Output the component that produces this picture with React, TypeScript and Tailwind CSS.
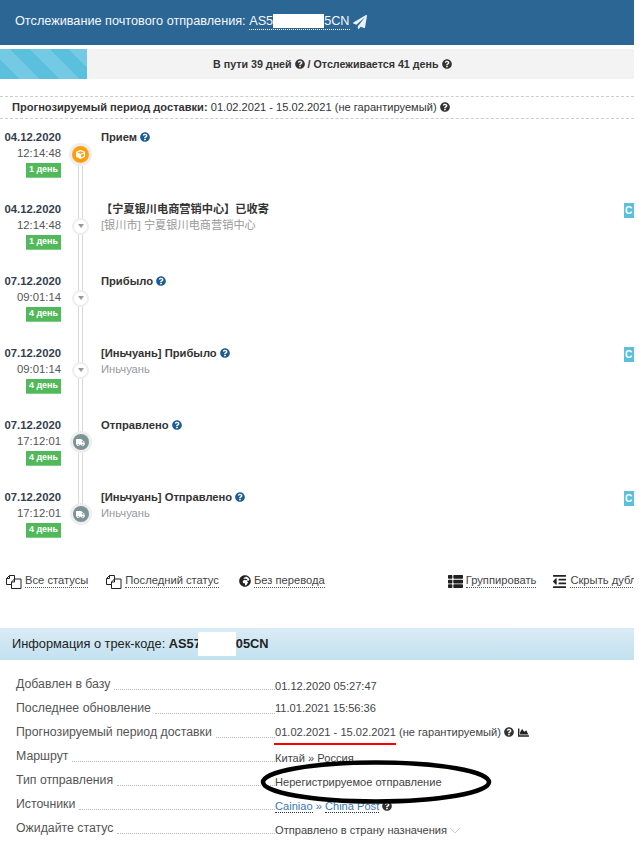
import { FaQuestionCircle, FaPaperPlane, FaGlobeAfrica, FaThList, FaOutdent, FaTruck, FaCube, FaChartArea } from 'react-icons/fa'

const events = [
  { date: '04.12.2020', time: '12:14:48', days: '1 день', title: 'Прием', help: true, kind: 'box' },
  { date: '04.12.2020', time: '12:14:48', days: '1 день', title: '【宁夏银川电商营销中心】已收寄', sub: '[银川市] 宁夏银川电商营销中心', kind: 'arrow', side: true },
  { date: '07.12.2020', time: '09:01:14', days: '4 день', title: 'Прибыло', help: true, kind: 'arrow' },
  { date: '07.12.2020', time: '09:01:14', days: '4 день', title: '[Иньчуань] Прибыло', help: true, sub: 'Иньчуань', kind: 'arrow', side: true },
  { date: '07.12.2020', time: '17:12:01', days: '4 день', title: 'Отправлено', help: true, kind: 'truck' },
  { date: '07.12.2020', time: '17:12:01', days: '4 день', title: '[Иньчуань] Отправлено', help: true, sub: 'Иньчуань', kind: 'truck', side: true },
]

const infoRows = ['Добавлен в базу', 'Последнее обновление', 'Прогнозируемый период доставки', 'Маршрут', 'Тип отправления', 'Источники', 'Ожидайте статус']

function Help({ className = 'text-[#333]' }: { className?: string }) {
  return <FaQuestionCircle className={`inline-block text-[10px] align-[-1px] ml-[3px] ${className}`} />
}

function CopyIcon() {
  return (
    <svg width="16" height="15" viewBox="0 0 16 15" fill="none" stroke="#222" strokeWidth="1" className="shrink-0">
      <path d="M.5 10.5V4.5l3-3V4.500H.5M3.500 1.500h5V5" />
      <path d="M.5 10.500h5" />
      <path d="M5.500 14.500V8l3-3h6.500v9.500zM8.500 5v3h-3" fill="#fff" />
    </svg>
  )
}

function Dot({ kind }: { kind: string }) {
  if (kind === 'box') {
    return (
      <div className="w-[17px] h-[17px] rounded-full bg-[#ff9f0f] ring-[3px] ring-[#eeeeee] flex items-center justify-center">
        <FaCube className="text-white text-[9px]" />
      </div>
    )
  }
  if (kind === 'truck') {
    return (
      <div className="w-[16px] h-[16px] rounded-full bg-[#7d9396] ring-[3px] ring-[#eeeeee] flex items-center justify-center">
        <FaTruck className="text-white text-[9px]" />
      </div>
    )
  }
  return (
    <div className="w-[13px] h-[13px] rounded-full bg-white ring-[2px] ring-[#eeeeee] flex items-center justify-center">
      <div className="w-0 h-0 border-x-[3.5px] border-x-transparent border-t-[4px] border-t-[#999]" />
    </div>
  )
}

function Action({ icon, label, className = '' }: { icon: React.ReactNode; label: string; className?: string }) {
  return (
    <div className={`flex items-center gap-[3px] shrink-0 ${className}`}>
      {icon}
      <span className="border-b border-dotted border-[#555] leading-[13px] whitespace-nowrap">{label}</span>
    </div>
  )
}

export default function App() {
  return (
    <div className="w-[634px] h-[852px] overflow-hidden bg-white text-[#333] text-[11px] font-['Liberation_Sans','Noto_Sans_CJK_SC',sans-serif]">
      {/* шапка */}
      <div className="h-[45px] bg-[#2c6695] flex items-center pl-[15px] text-[12.7px] text-[#f4f8fb] pb-[2px]">
        <span>Отслеживание почтового отправления:&nbsp;</span>
        <span className="border-b border-dotted border-white leading-[15px] flex items-center">
          AS5<span className="inline-block w-[51px] h-[14px] bg-white" />5CN
        </span>
        <FaPaperPlane className="ml-[3px] text-[14px] text-[#e8f3fa]" />
      </div>

      {/* прогресс */}
      <div className="mt-[4px] h-[30px] bg-[#f3f3f3] flex">
        <div className="w-[87px] bg-[#5bc0de] bg-[repeating-linear-gradient(45deg,#5bc0de_0,#5bc0de_14px,#74c9e4_14px,#74c9e4_28px)]" />
        <div className="flex-1 flex items-center pl-[126px] font-bold text-[10.7px] text-[#333]">
          <span>В пути 39 дней<Help /> / Отслеживается 41 день<Help /></span>
        </div>
      </div>

      {/* период */}
      <div className="mt-[17px] h-[23px] border-y border-dashed border-[#cccccc] flex items-center pl-3 text-[11.1px]">
        <span>
          <b>Прогнозируемый период доставки:</b> 01.02.2021 - 15.02.2021 (не гарантируемый)<Help />
        </span>
      </div>

      {/* статусы */}
      <div className="mt-[10px]">
        {events.map((ev, i) => (
          <div key={i} className="flex h-[72px]">
            <div className="w-[61px] flex flex-col items-end shrink-0">
              <div className="font-bold text-[#34404c] leading-4 text-[11.3px]">{ev.date}</div>
              <div className="leading-4 text-[#555] text-[11.3px]">{ev.time}</div>
              <div className="mt-[2px] w-[35px] h-[15px] bg-[#52b95a] border-b border-[#7fce85] text-white text-[9px] font-bold flex items-center justify-center">
                {ev.days}
              </div>
            </div>
            <div className="w-10 shrink-0 relative">
              <div
                className={`absolute left-[17px] w-[5px] bg-white border-x-[1.5px] border-[#d3dbe2] ${
                  i === 0 ? 'top-6 bottom-0' : i === events.length - 1 ? 'top-0 h-6' : 'top-0 bottom-0'
                }`}
              />
              <div className="absolute left-0 right-0 top-4 h-[18px] flex items-center justify-center pr-px">
                <Dot kind={ev.kind} />
              </div>
            </div>
            <div className="flex-1 relative">
              <div className="font-bold text-[#333] leading-4 text-[11.2px]">
                {ev.title}
                {ev.help && <Help className="text-[#1d5c94]" />}
              </div>
              {ev.sub && <div className="leading-4 text-[#999] text-[11.2px]">{ev.sub}</div>}
              {ev.side && (
                <div className="absolute right-0 top-[2px] w-[10px] h-[15px] bg-[#5bc0de] overflow-hidden text-white text-[10px] font-bold leading-[15px] pl-[1px]">
                  C
                </div>
              )}
            </div>
          </div>
        ))}
      </div>

      {/* действия */}
      <div className="mt-[11px] flex items-center h-[18px] text-[11.2px] text-[#444] relative whitespace-nowrap">
        <Action className="ml-[6px]" icon={<CopyIcon />} label="Все статусы" />
        <Action className="ml-[18px]" icon={<CopyIcon />} label="Последний статус" />
        <Action className="ml-[20px]" icon={<FaGlobeAfrica className="text-[12px] text-[#222]" />} label="Без перевода" />
        <Action className="ml-[123px]" icon={<FaThList className="text-[15px] text-[#222]" />} label="Группировать" />
        <Action className="ml-[16px]" icon={<FaOutdent className="text-[15px] text-[#222]" />} label="Скрыть дубликаты" />
      </div>

      {/* информация */}
      <div className="mt-[38px] h-[32px] bg-gradient-to-b from-[#d9ecf6] to-[#c3e1f0] flex items-center pl-3 text-[12.8px] text-[#222]">
        <span>Информация о трек-коде:&nbsp;</span>
        <b className="flex items-center">
          AS57<span className="inline-block w-[38px] h-[24px] -ml-[3px] bg-white" />05CN
        </b>
      </div>

      <div className="relative mt-[16px] pl-4 text-[#555]">
        {infoRows.map((label, i) => (
          <div key={label} className="flex items-start h-[24px]">
            <div className="w-[259px] h-4 flex items-end shrink-0">
              <span className="leading-4 text-[12.3px] whitespace-nowrap">{label}</span>
              <span className="flex-1 ml-1 mb-[2px] border-b border-dotted border-[#bbbbbb]" />
            </div>
            <div className={`leading-4 text-[#444] text-[11.1px] whitespace-nowrap flex items-center ${i === 0 || i > 2 ? 'mt-0.5' : ''}`}>
              {i === 0 && '01.12.2020 05:27:47'}
              {i === 1 && '11.01.2021 15:56:36'}
              {i === 2 && (
                <>
                  <span className="relative">
                    01.02.2021 - 15.02.2021
                    <span className="absolute -left-px right-0 top-[19px] h-[2px] bg-[#ff0000]" />
                  </span>
                  <span>&nbsp;(не гарантируемый)</span>
                  <Help />
                  <FaChartArea className="ml-1 text-[11px] text-[#222]" />
                </>
              )}
              {i === 3 && 'Китай » Россия'}
              {i === 4 && 'Нерегистрируемое отправление'}
              {i === 5 && (
                <>
                  <span className="text-[#3a78b5] border-b border-dotted border-[#333] leading-3">Cainiao</span>
                  <span className="text-[#3a78b5]">&nbsp;»&nbsp;</span>
                  <span className="text-[#3a78b5] border-b border-dotted border-[#333] leading-3">China Post</span>
                  <Help />
                </>
              )}
              {i === 6 && (
                <>
                  Отправлено в страну назначения
                  <svg width="12" height="7" viewBox="0 0 12 7" fill="none" stroke="#cfcfcf" className="ml-[2px]">
                    <path d="M1 1l5 5 5-5" />
                  </svg>
                </>
              )}
            </div>
          </div>
        ))}
        {/* обводка от руки */}
        <svg width="240" height="48" viewBox="0 0 240 48" fill="none" className="absolute left-[259px] top-[82px]">
          <ellipse cx="117" cy="24" rx="113" ry="19.500" stroke="#000" strokeWidth="4.500" />
        </svg>
      </div>
    </div>
  )
}
